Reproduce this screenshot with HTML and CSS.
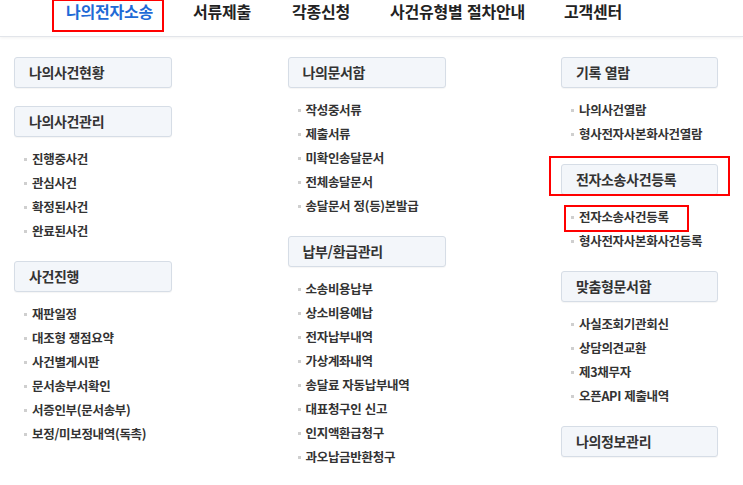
FILE: index.html
```html
<!DOCTYPE html>
<html lang="ko">
<head>
<meta charset="utf-8">
<title>나의전자소송</title>
<link rel="stylesheet" href="styles.css">
</head>
<body>
<nav class="gnb">
  <a class="gnb-item gnb-item--active gnb-item--marked" style="width:127px">나의전자소송</a>
  <a class="gnb-item" style="width:99px">서류제출</a>
  <a class="gnb-item" style="width:98px">각종신청</a>
  <a class="gnb-item" style="width:174px">사건유형별 절차안내</a>
  <a class="gnb-item">고객센터</a>
</nav>
<main class="menu">
  <div class="col">
    <section class="group">
      <h3 class="group-title">나의사건현황</h3>
    </section>
    <section class="group">
      <h3 class="group-title">나의사건관리</h3>
      <ul class="group-list">
        <li>진행중사건</li>
        <li>관심사건</li>
        <li>확정된사건</li>
        <li>완료된사건</li>
      </ul>
    </section>
    <section class="group">
      <h3 class="group-title">사건진행</h3>
      <ul class="group-list">
        <li>재판일정</li>
        <li>대조형 쟁점요약</li>
        <li>사건별게시판</li>
        <li>문서송부서확인</li>
        <li>서증인부(문서송부)</li>
        <li>보정/미보정내역(독촉)</li>
      </ul>
    </section>
  </div>
  <div class="col">
    <section class="group">
      <h3 class="group-title">나의문서함</h3>
      <ul class="group-list">
        <li>작성중서류</li>
        <li>제출서류</li>
        <li>미확인송달문서</li>
        <li>전체송달문서</li>
        <li>송달문서 정(등)본발급</li>
      </ul>
    </section>
    <section class="group">
      <h3 class="group-title">납부/환급관리</h3>
      <ul class="group-list">
        <li>소송비용납부</li>
        <li>상소비용예납</li>
        <li>전자납부내역</li>
        <li>가상계좌내역</li>
        <li>송달료 자동납부내역</li>
        <li>대표청구인 신고</li>
        <li>인지액환급청구</li>
        <li>과오납금반환청구</li>
      </ul>
    </section>
  </div>
  <div class="col">
    <section class="group">
      <h3 class="group-title">기록 열람</h3>
      <ul class="group-list">
        <li>나의사건열람</li>
        <li>형사전자사본화사건열람</li>
      </ul>
    </section>
    <section class="group">
      <h3 class="group-title group-title--marked">전자소송사건등록</h3>
      <ul class="group-list">
        <li class="item--marked">전자소송사건등록</li>
        <li>형사전자사본화사건등록</li>
      </ul>
    </section>
    <section class="group">
      <h3 class="group-title">맞춤형문서함</h3>
      <ul class="group-list">
        <li>사실조회기관회신</li>
        <li>상담의견교환</li>
        <li>제3채무자</li>
        <li>오픈API 제출내역</li>
      </ul>
    </section>
    <section class="group">
      <h3 class="group-title">나의정보관리</h3>
    </section>
  </div>
</main>
</body>
</html>
```

FILE: styles.css
```css
* { box-sizing: border-box; }
html, body { margin: 0; padding: 0; background: #fff; }
body {
  font-family: "Noto Sans CJK KR", "Noto Sans", sans-serif;
  color: #333;
  width: 743px;
  height: 485px;
  overflow: hidden;
}

.gnb {
  display: flex;
  align-items: flex-start;
  height: 37px;
  padding-left: 66px;
  border-bottom: 1px solid #e2e5ea;
  box-shadow: 0 1px 3px rgba(0, 0, 0, 0.06);
}
.gnb-item {
  display: block;
  font-size: 16px;
  font-weight: 700;
  letter-spacing: -0.2px;
  line-height: 22px;
  color: #222;
  white-space: nowrap;
  text-decoration: none;
  position: relative;
}
.gnb-item--active { color: #1f6ad6; }
.gnb-item--marked::after {
  content: "";
  position: absolute;
  left: -14px;
  top: -1px;
  width: 108px;
  height: 29px;
  border: 2px solid #f00;
}

.menu {
  display: grid;
  grid-template-columns: 158px 158px 157px;
  column-gap: 115.5px;
  padding: 20px 0 0 14px;
}

.group { margin-bottom: 18px; }
.group-title {
  position: relative;
  margin: 0;
  height: 31px;
  padding-left: 14px;
  background: #f3f6fa;
  border: 1px solid #d6dde6;
  border-radius: 3px;
  box-shadow: 0 1px 1px rgba(0, 0, 0, 0.04);
  font-size: 14px;
  font-weight: 700;
  letter-spacing: -0.35px;
  line-height: 29px;
  color: #333;
}
.group-title--marked::after {
  content: "";
  position: absolute;
  left: -13px;
  right: -13px;
  top: -9px;
  bottom: -2px;
  border: 2px solid #f00;
}

.group-list {
  list-style: none;
  margin: 0;
  padding: 10px 0 0 0;
}
.group-list li {
  position: relative;
  height: 24px;
  line-height: 24px;
  padding-left: 18px;
  font-size: 12.5px;
  font-weight: 700;
  letter-spacing: -0.3px;
  color: #333;
  white-space: nowrap;
}
.group-list li::before {
  content: "";
  position: absolute;
  left: 10px;
  top: 11px;
  width: 3px;
  height: 3px;
  background: #cfcfcf;
}
.item--marked::after {
  content: "";
  position: absolute;
  left: 3px;
  top: 0;
  width: 121px;
  height: 23px;
  border: 2px solid #f00;
}
```
